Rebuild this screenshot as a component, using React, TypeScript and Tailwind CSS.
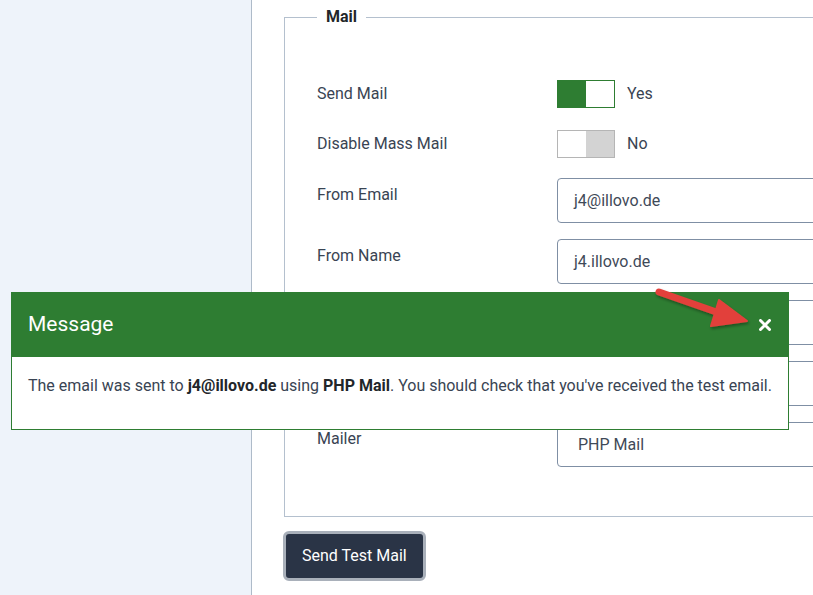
import React from "react";

const font = { fontFamily: "Roboto, 'Noto Sans', Arial, sans-serif" };

function Toggle({ on }: { on: boolean }) {
  return (
    <div className="flex items-center gap-3">
      {on ? (
        <div className="flex h-[28px] w-[58px] border border-[#2e7d32]">
          <div className="w-1/2 bg-[#2e7d32]" />
          <div className="w-1/2 bg-white" />
        </div>
      ) : (
        <div className="flex h-[28px] w-[58px] border border-[#b5b5b5]">
          <div className="w-1/2 bg-white" />
          <div className="w-1/2 bg-[#d3d3d3]" />
        </div>
      )}
      <span className="text-[16px] text-[#394453]">{on ? "Yes" : "No"}</span>
    </div>
  );
}

function Row({ label, children, toggle }: { label: string; children: React.ReactNode; toggle?: boolean }) {
  return (
    <div className={toggle ? "flex items-center" : "flex items-start"}>
      <div className={"w-[240px] shrink-0 text-[16px] text-[#394453] " + (toggle ? "" : "pt-[5px]")}>{label}</div>
      {children}
    </div>
  );
}

function Input({ value, select }: { value: string; select?: boolean }) {
  return (
    <div
      className={
        "flex h-[45px] w-[400px] items-center rounded-[4px] border border-[#7f8fa4] bg-white text-[16px] text-[#3f4a58] " +
        (select ? "pl-[20px]" : "pl-[16px]")
      }
    >
      {value}
    </div>
  );
}

export default function App() {
  return (
    <div style={font} className="relative flex h-[595px] w-[813px] overflow-hidden bg-white">
      <div className="h-full w-[252px] shrink-0 border-r border-[#aebbc9] bg-[#eef3fa]" />

      <div className="flex flex-1 flex-col items-start overflow-hidden">
        <fieldset className="ml-[32px] mt-[7px] w-[700px] border border-[#b4c0ce] pb-[49px] pl-[32px]">
          <legend className="px-[9px] text-[16px] font-bold leading-[20px] text-[#22262a]">Mail</legend>
          <div className="mt-[53px] flex flex-col">
            <Row label="Send Mail" toggle>
              <Toggle on />
            </Row>
            <div className="h-[22px]" />
            <Row label="Disable Mass Mail" toggle>
              <Toggle on={false} />
            </Row>
            <div className="flex flex-col gap-[16px] pt-[20px]">
              <Row label="From Email">
                <Input value="j4@illovo.de" />
              </Row>
              <Row label="From Name">
                <Input value="j4.illovo.de" />
              </Row>
              <Row label="Reply-to Email">
                <Input value="" />
              </Row>
              <Row label="Reply-to Name">
                <Input value="" />
              </Row>
              <Row label="Mailer">
                <Input value="PHP Mail" select />
              </Row>
            </div>
          </div>
        </fieldset>

        <button className="ml-[31px] mt-[14px] flex h-[50px] items-center rounded-[6px] border-[3px] border-[#a9b0ba] bg-[#2a3446] px-[16px] text-[16px] text-white">
          Send Test Mail
        </button>
      </div>

      <div className="absolute left-[11px] top-[292px] w-[778px] border border-[#2e7d32] bg-white">
        <div className="flex h-[64px] items-center justify-between bg-[#2e7d32] pl-[16px] pr-[16px]">
          <span className="text-[21px] text-white">Message</span>
          <svg width="12" height="12" viewBox="0 0 12 12" className="mr-[1px]">
            <path d="M1.5 1.5 L10.5 10.5 M10.5 1.5 L1.5 10.5" stroke="#fff" strokeWidth="3" strokeLinecap="round" />
          </svg>
        </div>
        <div className="h-[72px] pl-[16px] pt-[17px] text-[16px] text-[#394453]">
          The email was sent to <b className="text-[#22262a]">j4@illovo.de</b> using <b className="text-[#22262a]">PHP Mail</b>. You should check that you've received the test email.
        </div>
      </div>

      <svg className="absolute left-0 top-0" width="813" height="595" style={{ pointerEvents: "none" }}>
        <defs>
          <filter id="sh" x="-20%" y="-20%" width="140%" height="140%">
            <feDropShadow dx="1" dy="2" stdDeviation="1.5" floodColor="#000" floodOpacity="0.35" />
          </filter>
        </defs>
        <g filter="url(#sh)" fill="#e2413b" stroke="#e2413b">
          <line x1="659" y1="292" x2="722" y2="314" strokeWidth="7" strokeLinecap="round" />
          <polygon points="719,300 747,321 711,326" strokeWidth="2" strokeLinejoin="round" />
        </g>
      </svg>
    </div>
  );
}
